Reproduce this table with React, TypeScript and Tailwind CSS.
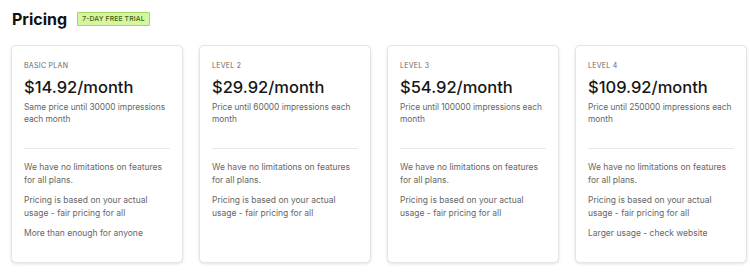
import React from "react";

const plans = [
  { label: "BASIC PLAN", price: "$14.92/month", desc: "Same price until 30000 impressions each month", last: "More than enough for anyone" },
  { label: "LEVEL 2", price: "$29.92/month", desc: "Price until 60000 impressions each month", last: "" },
  { label: "LEVEL 3", price: "$54.92/month", desc: "Price until 100000 impressions each month", last: "" },
  { label: "LEVEL 4", price: "$109.92/month", desc: "Price until 250000 impressions each month", last: "Larger usage - check website" },
];

export default function App() {
  return (
    <div className="w-[750px] h-[275px] bg-white overflow-hidden" style={{ fontFamily: "Inter, 'Noto Sans', sans-serif" }}>
      <div className="flex items-center gap-[10px] pl-3 pt-[9px]">
        <h1 className="text-[16px] leading-[20px] font-bold text-[#111]">Pricing</h1>
        <span className="h-[14px] px-[4px] flex items-center border border-[#a3d860] bg-[#d6f5a0] text-[#3f6212] text-[6.8px] font-medium tracking-[0.02em] rounded-[1px]">7-DAY FREE TRIAL</span>
      </div>
      <div className="flex gap-4 pl-[11px] mt-[16px]">
        {plans.map((p) => (
          <div key={p.label} className="w-[172px] h-[218px] shrink-0 bg-white border border-[#e5e5e5] rounded-[5px] shadow-[0_1px_3px_rgba(0,0,0,0.12)] px-[12px] pt-[15px]">
            <div className="text-[7px] leading-[10px] tracking-[0.04em] text-[#666]">{p.label}</div>
            <div className="mt-[6px] text-[16.5px] leading-[20px] font-medium text-[#161616]">{p.price}</div>
            <div className="mt-[4px] text-[8.4px] leading-[12px] text-[#666] h-[47px] tracking-[-0.005em]">{p.desc}</div>
            <div className="border-t border-[#e8e8e8]" />
            <div className="pt-[12px] text-[8.5px] leading-[12.5px] text-[#666] flex flex-col gap-[8px]">
              <p>We have no limitations on features for all plans.</p>
              <p>Pricing is based on your actual usage - fair pricing for all</p>
              {p.last && <p>{p.last}</p>}
            </div>
          </div>
        ))}
      </div>
    </div>
  );
}
